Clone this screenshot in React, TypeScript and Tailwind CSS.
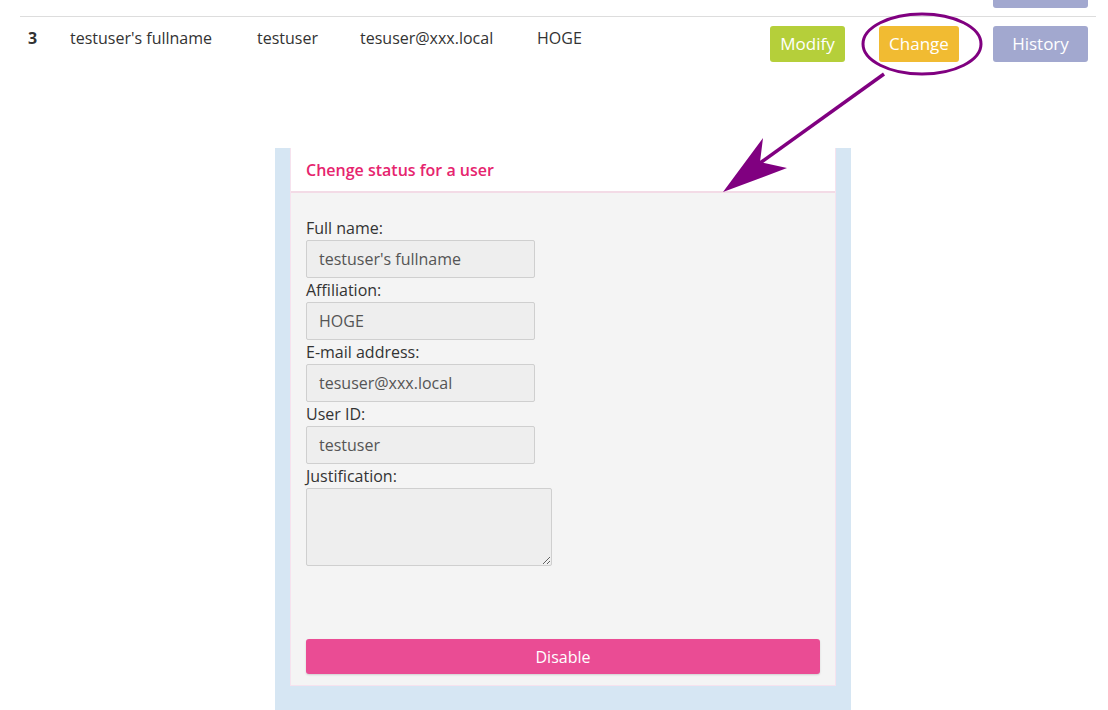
import React from "react";

const font = { fontFamily: '"Open Sans", "Noto Sans", sans-serif' };

function Field({ label, value }: { label: string; value: string }) {
  return (
    <div className="flex flex-col">
      <label className="text-[16px] leading-[24px] text-[#333]">{label}</label>
      <div className="w-[229px] h-[38px] border border-[#cfcfcf] bg-[#eeeeee] rounded-[2px] px-[12px] flex items-center text-[16px] text-[#555]">
        {value}
      </div>
    </div>
  );
}

export default function App() {
  return (
    <div className="relative w-[1108px] h-[710px] bg-white overflow-hidden text-[#333]" style={font}>
      {/* table */}
      <div className="ml-[20px] mr-[12px]">
        <div className="h-[17px] border-b border-[#dddddd] flex justify-end pr-[8px]">
          <div className="w-[95px] h-[26px] -mt-[18px] rounded-[3px] bg-[#a2a8cf]" />
        </div>
        <div className="flex items-start h-[60px] text-[16px]">
          <div className="w-[50px] pl-[8px] pt-[9px] font-bold leading-[24px]">3</div>
          <div className="w-[187px] pt-[9px] leading-[24px]">testuser's fullname</div>
          <div className="w-[103px] pt-[9px] leading-[24px]">testuser</div>
          <div className="w-[177px] pt-[9px] leading-[24px]">tesuser@xxx.local</div>
          <div className="flex-1 pt-[9px] leading-[24px]">HOGE</div>
          <div className="flex gap-[34px] pt-[9px] pr-[8px]">
            <button className="w-[75px] h-[36px] rounded-[3px] bg-[#b5cf3a] text-white text-[17px]">Modify</button>
            <button className="w-[80px] h-[36px] rounded-[3px] bg-[#f1bb32] text-white text-[17px]">Change</button>
            <button className="w-[95px] h-[36px] rounded-[3px] bg-[#a2a8cf] text-white text-[17px]">History</button>
          </div>
        </div>
      </div>

      {/* panel */}
      <div className="ml-[275px] mt-[71px] w-[576px] h-[562px] bg-[#d6e6f3] px-[15px] pb-[24px]">
        <div className="h-full bg-[#f4f4f4] border-x border-b border-[#f6e2ee] flex flex-col">
          <div className="h-[45px] bg-white border-b-2 border-[#f3dbe6] px-[15px] flex items-center">
            <span className="text-[16px] font-semibold text-[#e6246e]">Chenge status for a user</span>
          </div>
          <div className="flex-1 flex flex-col px-[15px] pt-[23px] pb-[11px]">
            <Field label="Full name:" value="testuser's fullname" />
            <Field label="Affiliation:" value="HOGE" />
            <Field label="E-mail address:" value="tesuser@xxx.local" />
            <Field label="User ID:" value="testuser" />
            <label className="text-[16px] leading-[24px] text-[#333]">Justification:</label>
            <textarea
              readOnly
              className="w-[246px] h-[78px] border border-[#cfcfcf] bg-[#eeeeee] rounded-[2px] resize-y outline-none"
            />
            <div className="flex-1" />
            <button className="w-full h-[35px] rounded-[3px] bg-[#ea4c94] text-white text-[16px] shadow-[0_1px_2px_rgba(0,0,0,0.15)]">
              Disable
            </button>
          </div>
        </div>
      </div>

      {/* annotation overlay */}
      <svg className="absolute left-0 top-0 pointer-events-none" width="1108" height="710" viewBox="0 0 1108 710">
        <ellipse cx="922" cy="44" rx="59" ry="30" fill="none" stroke="#800080" strokeWidth="3" />
        <line x1="884" y1="74" x2="760" y2="163" stroke="#800080" strokeWidth="3.5" />
        <polygon points="723,192 763,138 760,162 787,168" fill="#800080" />
      </svg>
    </div>
  );
}
